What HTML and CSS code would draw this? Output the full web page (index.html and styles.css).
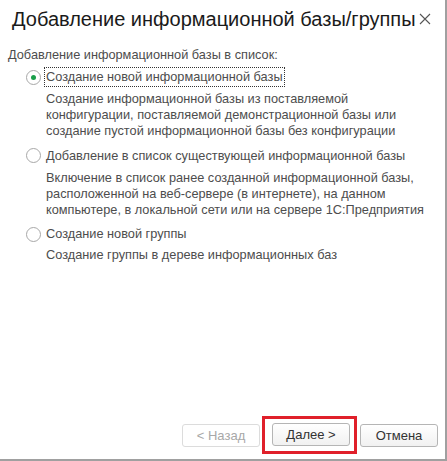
FILE: index.html
```html
<!DOCTYPE html>
<html lang="ru">
<head>
    <meta charset="UTF-8">
    <title>Добавление информационной базы/группы</title>
    <link rel="stylesheet" href="styles.css">
</head>
<body>

    <div class="window">
        <!-- Header -->
        <div class="header">
            <h1>Добавление информационной базы/группы</h1>
            <span class="close-btn">
                <svg width="12" height="12" viewBox="0 0 12 12"><path d="M1 1 L11 11 M11 1 L1 11" stroke="#555" stroke-width="1.1" fill="none"/></svg>
            </span>
        </div>

        <!-- Options -->
        <div class="content">
            <p class="caption">Добавление информационной базы в список:</p>

            <div class="option">
                <div class="option-row">
                    <span class="radio checked"></span>
                    <span class="option-label focused">Создание новой информационной базы</span>
                </div>
                <p class="option-desc">Создание информационной базы из поставляемой<br>конфигурации, поставляемой демонстрационной базы или<br>создание пустой информационной базы без конфигурации</p>
            </div>

            <div class="option">
                <div class="option-row">
                    <span class="radio"></span>
                    <span class="option-label">Добавление в список существующей информационной базы</span>
                </div>
                <p class="option-desc">Включение в список ранее созданной информационной базы,<br>расположенной на веб-сервере (в интернете), на данном<br>компьютере, в локальной сети или на сервере 1С:Предприятия</p>
            </div>

            <div class="option option-group">
                <div class="option-row">
                    <span class="radio"></span>
                    <span class="option-label">Создание новой группы</span>
                </div>
                <p class="option-desc">Создание группы в дереве информационных баз</p>
            </div>
        </div>

        <!-- Buttons -->
        <div class="footer">
            <button class="btn" disabled>&lt; Назад</button>
            <div class="highlight">
                <button class="btn">Далее &gt;</button>
            </div>
            <button class="btn">Отмена</button>
        </div>
    </div>

</body>
</html>
```

FILE: styles.css
```css
* { margin: 0; padding: 0; box-sizing: border-box; }
body { font-family: 'Liberation Sans', Arial, sans-serif; background: #fff; color: #4d4d4d; }

.window {
    width: 447px; height: 461px; display: flex; flex-direction: column;
    border-right: 2px solid #a0a0a0; border-bottom: 2px solid #a0a0a0; background: #fff;
}

/* Header */
.header { display: flex; align-items: center; justify-content: space-between; height: 38px; padding: 0 14px 0 12px; }
.header h1 { font-size: 20px; font-weight: normal; color: #1a1a1a; }
.close-btn { display: flex; align-items: center; }

/* Content */
.content { padding: 9px 8px 0 8px; font-size: 12.75px; }
.caption { line-height: 16px; }
.option { margin-top: 4px; }
.option-group { margin-top: 0; }
.option-row { display: flex; align-items: center; height: 20px; padding-left: 18px; }
.option-label { margin-left: 3px; padding: 1px 1px; border: 1px solid transparent; line-height: 16px; }
.option-label.focused { border: 1px dotted #333; }
.option-desc { padding-left: 38px; margin-top: 4px; line-height: 16.2px; margin-bottom: 6px; }
.option-group .option-desc { margin-top: 3px; }

.radio {
    width: 15px; height: 15px; border-radius: 50%; border: 1px solid #a8a8a8;
    background: #fff; display: flex; align-items: center; justify-content: center;
}
.radio.checked::after { content: ""; width: 5px; height: 5px; border-radius: 50%; background: #1a9f4a; }

/* Footer */
.footer { margin-top: auto; display: flex; justify-content: flex-end; align-items: center; padding: 0 7px 5px 0; }
.btn {
    width: 78px; height: 23px; font-family: 'Liberation Sans', Arial, sans-serif; font-size: 13px; color: #333;
    background: linear-gradient(#ffffff, #f1f1f1); border: 1px solid #b5b5b5; border-radius: 3px;
}
.btn:disabled { color: #a8a8a8; border-color: #dcdcdc; background: #fff; }
.highlight { border: 3px solid #e0202a; padding: 4px 4px 5px 7px; margin: 0 3px 0 2px; }
```
